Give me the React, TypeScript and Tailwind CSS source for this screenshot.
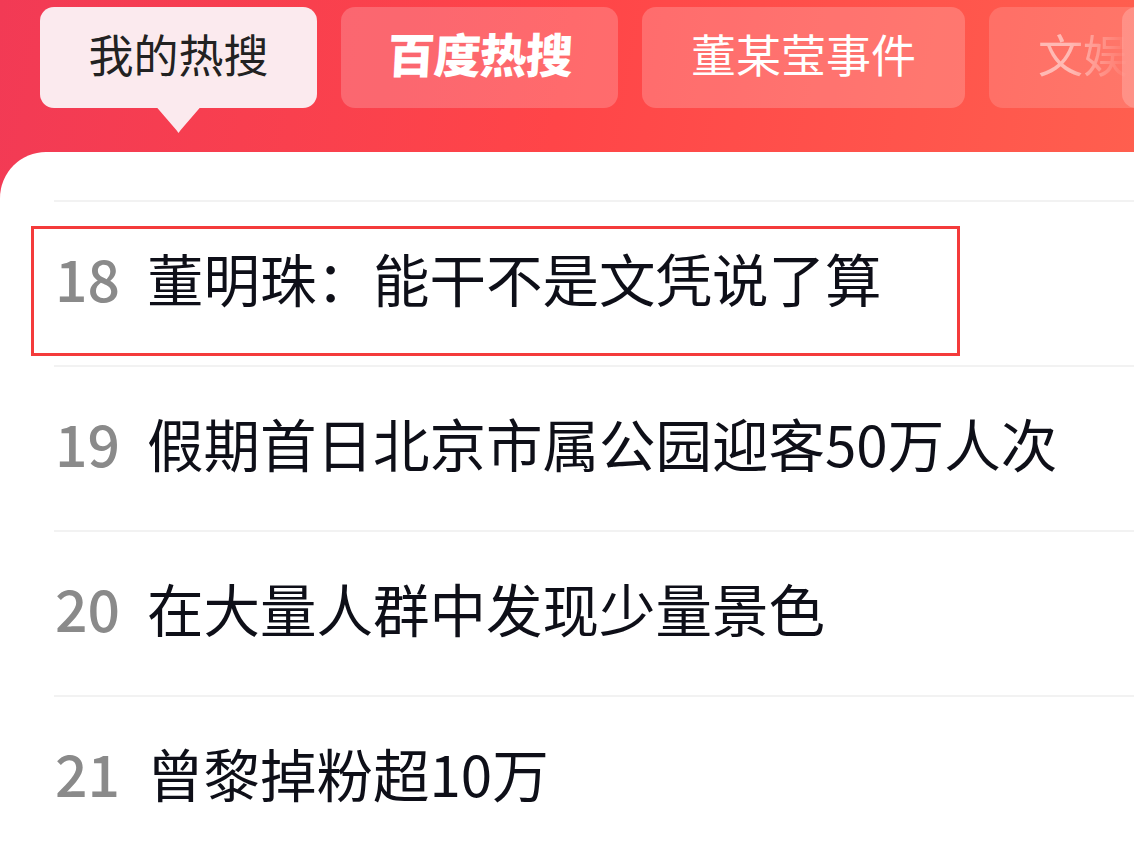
import React from "react";

const rows = [
  { n: 18, title: "董明珠：能干不是文凭说了算", marked: true },
  { n: 19, title: "假期首日北京市属公园迎客50万人次" },
  { n: 20, title: "在大量人群中发现少量景色" },
  { n: 21, title: "曾黎掉粉超10万" },
];

const cjk = "font-['Noto_Sans_CJK_SC','Noto_Sans',sans-serif]";

export default function App() {
  return (
    <div
      className={`relative flex h-[846px] w-[1134px] flex-col overflow-hidden bg-[linear-gradient(100deg,#f23a55_0%,#ff4548_45%,#ff6450_100%)] ${cjk}`}
    >
      {/* tab strip */}
      <div className="relative flex shrink-0 gap-[24px] pl-[40px] pt-[7px]">
        <div className="relative flex h-[101px] w-[277px] shrink-0 items-center justify-center rounded-[14px] bg-[#fbeaee] pb-[8px] text-[45px] text-[#222222]">
          我的热搜
          {/* pointer */}
          <div className="absolute left-1/2 top-[100px] h-[26px] w-[44px] -translate-x-1/2 bg-[#fbeaee] [clip-path:polygon(0_0,100%_0,55%_88%,50%_100%,45%_88%)]" />
        </div>
        <div className="flex h-[101px] w-[277px] shrink-0 items-center justify-center rounded-[14px] bg-white/20 pb-[8px] text-[47px] font-black tracking-[-1px] text-white">
          <span className="-skew-x-3">百度热搜</span>
        </div>
        <div className="flex h-[101px] w-[323px] shrink-0 items-center justify-center rounded-[14px] bg-white/20 pb-[8px] text-[45px] text-white">
          董某莹事件
        </div>
        <div className="flex h-[101px] w-[277px] shrink-0 items-center rounded-[14px] bg-white/15 pb-[8px] pl-[49px] text-[45px] text-white">
          <span className="opacity-50 [mask-image:linear-gradient(to_right,black_0%,black_35%,transparent_100%)]">
            文娱
          </span>
        </div>
        <div className="absolute left-[1122px] top-[7px] h-[101px] w-[40px] rounded-[14px] bg-white/20" />
      </div>

      {/* list panel */}
      <div className="mt-[44px] flex-1 rounded-tl-[46px] bg-white pt-[48px]">
        {rows.map((r) => (
          <div
            key={r.n}
            className="relative ml-[54px] flex h-[165px] items-center border-t-2 border-[#f2f2f2] pb-[12px]"
          >
            <span className="w-[93px] shrink-0 pl-[1px] text-[57px] font-medium text-[#8a8a8a]">{r.n}</span>
            <span className="text-[56.5px] text-[#0e0f18]">{r.title}</span>
            {r.marked && (
              <div className="absolute -left-[23px] top-[24px] h-[130px] w-[929px] border-[3px] border-[#f43b3b]" />
            )}
          </div>
        ))}
      </div>
    </div>
  );
}
